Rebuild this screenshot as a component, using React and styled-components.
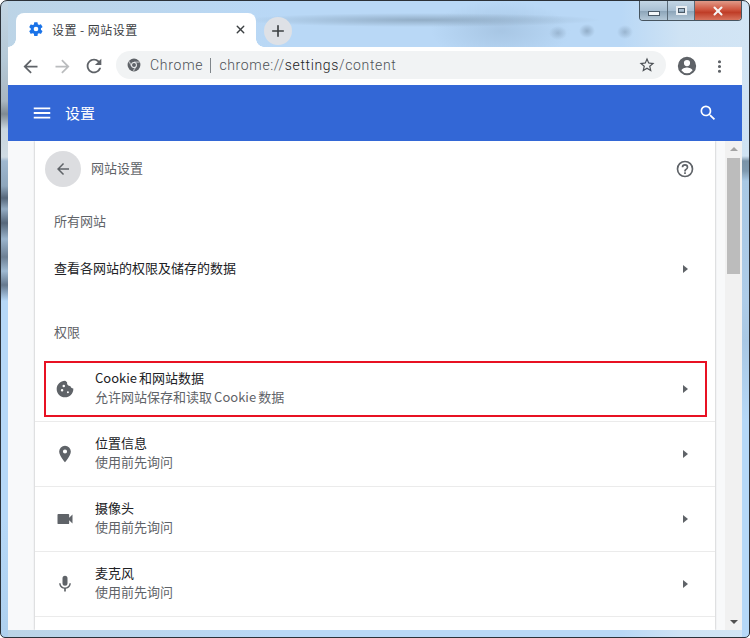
import React from 'react';
import styled, {createGlobalStyle} from 'styled-components';
import {Plus, X} from 'lucide-react';

const colors = {
    blue: '#3367d6',
    grey: '#5f6368',
    text: '#202124',
    line: '#ebebeb',
    side: '#f8f9fa',
};
const cjk = `"Noto Sans CJK SC", "Noto Sans", sans-serif`;

const Global = createGlobalStyle`
  html, body { margin: 0; padding: 0; }
  body { width: 750px; height: 638px; overflow: hidden; font-family: ${cjk}; }
`;

const leftStrip = `linear-gradient(180deg, #c3d6e4 0, #b4c8d6 60px, #a9b6c0 100px, #7f8a92 113px, #c9d6df 128px, #cfdbe3 156px,
  #9fb8d0 160px, #8ea6bc 185px, #56677a 197px, #93abc2 208px, #56677a 222px, #9ab4cc 238px, #6d8094 256px, #9fbad2 270px,
  #66798e 284px, #b6d8f7 300px, #b6d8f7 520px, #aed0ee 638px)`;
const rightStrip = `linear-gradient(180deg, #d2e5f5 0, #cfe2f2 155px, #7a93a8 160px, #7f99af 170px, #a8c8e4 180px,
  #aecce8 300px, #a9c8e4 340px, #b6d8f7 420px, #b6d8f7 638px)`;

const Frame = styled.div`
  position: relative;
  box-sizing: border-box;
  width: 750px;
  height: 638px;
  padding: 0 7px 7px 7px;
  display: flex;
  flex-direction: column;
  border: 1px solid #2b3138;
  border-radius: 7px 7px 5px 5px;
  overflow: hidden;
  background:
    ${leftStrip} 0 0 / 7px 100% no-repeat,
    ${rightStrip} right 0 top 0 / 7px 100% no-repeat,
    radial-gradient(ellipse 9px 7px at 557px 32px, rgba(120, 145, 170, .45), transparent),
    radial-gradient(ellipse 8px 7px at 586px 30px, rgba(120, 145, 170, .6), transparent),
    radial-gradient(ellipse 8px 7px at 624px 31px, rgba(120, 145, 170, .5), transparent),
    radial-gradient(ellipse 180px 7px at 420px 19px, rgba(125, 150, 172, .65), transparent),
    radial-gradient(ellipse 70px 30px at 500px 30px, rgba(150, 180, 210, .5), transparent),
    linear-gradient(90deg, #bcd4e6 0, #b9d8f6 280px, #b9d8f6 620px, #cfe3f4 680px, #d2e5f5 100%);
`;
const WindowButtons = styled.div`
  position: absolute;
  top: 0;
  right: 7px;
  display: flex;
  height: 19px;
  border: 1px solid #46545f;
  border-top: 0;
  border-radius: 0 0 4px 4px;
  overflow: hidden;
`;
const WindowButton = styled.div`
  width: ${p => p.$w}px;
  display: flex;
  align-items: center;
  justify-content: center;
  border-right: 1px solid #5a6a78;
  background: ${p => p.$close
    ? 'linear-gradient(180deg, #e09a88 0, #cf5640 45%, #bf3d27 60%, #d8735d 100%)'
    : 'linear-gradient(180deg, #c3d5e4 0, #a9bfd2 50%, #8ea6ba 55%, #b4c8d8 100%)'};
  &:last-child { border-right: 0; }
`;
const MinGlyph = styled.div`
  width: 10px;
  height: 3px;
  margin-top: 5px;
  background: #f4f7fa;
  border: 1px solid #4b5a68;
`;
const MaxGlyph = styled.div`
  box-sizing: border-box;
  width: 11px;
  height: 9px;
  background: transparent;
  border: 2px solid #e9eef3;
  outline: 1px solid #4b5a68;
  outline-offset: -3px;
`;
const CloseGlyph = styled(X)`
  color: #f6f6f6;
`;

const TabStrip = styled.div`
  height: 46px;
  padding: 12px 0 0 8px;
  box-sizing: border-box;
  display: flex;
  align-items: flex-start;
  gap: 8px;
  flex-shrink: 0;
`;
const Tab = styled.div`
  position: relative;
  width: 240px;
  height: 34px;
  box-sizing: border-box;
  padding: 0 9px 2px 12px;
  background: #fff;
  border-radius: 8px 8px 0 0;
  display: flex;
  align-items: center;
  font-size: 12px;
  letter-spacing: 0.45px;
  color: #3c4043;
  &::before, &::after {
    content: '';
    position: absolute;
    bottom: 0;
    width: 8px;
    height: 8px;
  }
  &::before {
    left: -8px;
    background: radial-gradient(circle at 0 0, transparent 7.5px, #fff 8px);
  }
  &::after {
    right: -8px;
    background: radial-gradient(circle at 100% 0, transparent 7.5px, #fff 8px);
  }
`;
const TabTitle = styled.span`
  margin-left: 8px;
  flex: 1;
`;
const NewTab = styled.div`
  width: 28px;
  height: 28px;
  margin-top: 4px;
  border-radius: 50%;
  background: #dee1e6;
  display: flex;
  align-items: center;
  justify-content: center;
  color: #3c4043;
`;

const Toolbar = styled.div`
  height: 38px;
  box-sizing: border-box;
  background: #fff;
  display: flex;
  align-items: flex-start;
  padding: 4px 0 0 0;
  flex-shrink: 0;
`;
const NavButton = styled.div`
  width: 32px;
  height: 30px;
  display: flex;
  align-items: center;
  justify-content: center;
  color: ${p => p.$off ? '#babcbe' : colors.grey};
`;
const Nav = styled.div`
  display: flex;
  margin-left: 6px;
`;
const Omnibox = styled.div`
  margin-left: 6px;
  width: 550px;
  height: 28px;
  border-radius: 14px;
  background: #f1f3f4;
  display: flex;
  align-items: center;
  padding: 0 10px 0 11px;
  box-sizing: border-box;
  font-family: Roboto, sans-serif;
  font-weight: 300;
  font-size: 14px;
  color: #4d5156;
`;
const Origin = styled.span`
  margin-left: 9px;
  letter-spacing: 0.75px;
`;
const Divider = styled.span`
  width: 1px;
  height: 15px;
  background: #80868b;
  margin: 0 8px 0 7px;
`;
const Url = styled.span`
  flex: 1;
  letter-spacing: 0.65px;
  b { font-weight: 300; color: #202124; }
`;
const ToolbarEnd = styled.div`
  margin-left: 4px;
  display: flex;
  align-items: center;
  height: 30px;
`;
const ToolIcon = styled.div`
  width: 33px;
  height: 30px;
  display: flex;
  align-items: center;
  justify-content: center;
  color: ${colors.grey};
`;

const Header = styled.div`
  height: 56px;
  background: ${colors.blue};
  display: flex;
  align-items: center;
  color: #fff;
  padding: 0 24px 0 23px;
  flex-shrink: 0;
`;
const HeaderTitle = styled.span`
  margin-left: 12px;
  margin-bottom: 2px;
  font-size: 15px;
  flex: 1;
`;

const Body = styled.div`
  flex: 1;
  min-height: 0;
  display: flex;
  background: ${colors.side};
  overflow: hidden;
`;
const Card = styled.div`
  width: 680px;
  margin-left: 27px;
  background: #fff;
  box-shadow: 0 0 2px rgba(60, 64, 67, .4);
  flex-shrink: 0;
`;
const Scrollbar = styled.div`
  margin-left: 10px;
  width: 17px;
  background: #f1f1f1;
  display: flex;
  flex-direction: column;
  align-items: center;
  justify-content: space-between;
  padding: 6px 0;
  position: relative;
`;
const ScrollThumb = styled.div`
  position: absolute;
  top: 17px;
  left: 2px;
  width: 13px;
  height: 116px;
  background: #bcbcbc;
`;
const ScrollArrow = styled.div`
  width: 0;
  height: 0;
  border-left: 4px solid transparent;
  border-right: 4px solid transparent;
  ${p => p.$down ? 'border-top: 4px solid #505050;' : 'border-bottom: 4px solid #a3a3a3;'}
`;

const PageHead = styled.div`
  height: 56px;
  display: flex;
  align-items: center;
  padding: 0 20px 0 10px;
`;
const BackCircle = styled.div`
  width: 36px;
  height: 36px;
  border-radius: 50%;
  background: #dcdde0;
  display: flex;
  align-items: center;
  justify-content: center;
  color: ${colors.grey};
`;
const PageTitle = styled.span`
  margin-left: 10px;
  margin-bottom: 4px;
  font-size: 13px;
  color: ${colors.grey};
  flex: 1;
`;
const SectionLabel = styled.div`
  height: ${p => p.$h}px;
  padding: ${p => p.$top}px 0 0 19px;
  box-sizing: border-box;
  font-size: 13px;
  line-height: 20px;
  color: ${colors.grey};
`;
const PlainRow = styled.div`
  height: 46px;
  display: flex;
  align-items: center;
  padding: 0 26px 0 19px;
  font-size: 13px;
  color: ${colors.text};
  justify-content: space-between;
`;
const PlainText = styled.span`
  margin-bottom: 4px;
`;
const Row = styled.div`
  height: 65px;
  box-sizing: border-box;
  display: flex;
  align-items: center;
  padding: 0 26px 0 20px;
  border-bottom: 1px solid ${colors.line};
`;
const RowIcon = styled.div`
  width: 20px;
  height: 20px;
  color: ${colors.grey};
  display: flex;
  align-items: center;
  justify-content: center;
`;
const RowText = styled.div`
  margin-left: 20px;
  margin-bottom: 4px;
  flex: 1;
  font-size: 13px;
  line-height: 19px;
  word-spacing: -0.8px;
  color: ${colors.text};
`;
const RowSub = styled.div`
  color: ${colors.grey};
`;
const Arrow = styled.div`
  width: 0;
  height: 0;
  border-top: 4px solid transparent;
  border-bottom: 4px solid transparent;
  border-left: 5px solid ${colors.grey};
  margin-right: 1px;
`;
const RedBox = styled.div`
  position: absolute;
  left: 43px;
  top: 360px;
  width: 663px;
  height: 56px;
  box-sizing: border-box;
  border: 2px solid #e81123;
  pointer-events: none;
`;

// material icons, same set chrome uses
const Icon = ({d, size = 20, fill = 'currentColor'}) => (
    <svg width={size} height={size} viewBox="0 0 24 24" fill={fill}><path d={d}/></svg>
);
const paths = {
    back: 'M20 11H7.83l5.59-5.59L12 4l-8 8 8 8 1.41-1.41L7.83 13H20v-2z',
    forward: 'M12 4l-1.41 1.41L16.17 11H4v2h12.17l-5.58 5.59L12 20l8-8z',
    reload: 'M17.65 6.35A7.958 7.958 0 0 0 12 4c-4.42 0-7.99 3.58-7.99 8s3.57 8 7.99 8c3.73 0 6.84-2.55 7.73-6h-2.08A5.99 5.99 0 0 1 12 18c-3.31 0-6-2.69-6-6s2.69-6 6-6c1.66 0 3.14.69 4.22 1.78L13 11h7V4l-2.35 2.35z',
    star: 'M22 9.24l-7.19-.62L12 2 9.19 8.63 2 9.24l5.46 4.73L5.82 21 12 17.27 18.18 21l-1.63-7.03L22 9.24zM12 15.4l-3.76 2.27 1-4.28-3.32-2.88 4.38-.38L12 6.1l1.71 4.04 4.38.38-3.32 2.88 1 4.28L12 15.4z',
    more: 'M12 8a2 2 0 1 0 0-4 2 2 0 0 0 0 4zm0 2a2 2 0 1 0 0 4 2 2 0 0 0 0-4zm0 6a2 2 0 1 0 0 4 2 2 0 0 0 0-4z',
    menu: 'M3 18h18v-2H3v2zm0-5h18v-2H3v2zm0-7v2h18V6H3z',
    search: 'M15.5 14h-.79l-.28-.27A6.471 6.471 0 0 0 16 9.5 6.5 6.5 0 1 0 9.5 16c1.61 0 3.09-.59 4.23-1.57l.27.28v.79l5 4.99L20.49 19l-4.99-5zm-6 0C7.01 14 5 11.99 5 9.5S7.01 5 9.5 5 14 7.01 14 9.5 11.99 14 9.5 14z',
};

const GearIcon = () => (
    <svg width="16" height="16" viewBox="0 0 24 24" fill="#1a73e8">
        <path d="M19.4 13c.04-.32.06-.66.06-1s-.02-.68-.07-1l2.16-1.68a.5.5 0 0 0 .12-.64l-2.05-3.54a.5.5 0 0 0-.62-.22l-2.55 1.02a7.5 7.5 0 0 0-1.73-1l-.39-2.7A.5.5 0 0 0 13.83 2H9.74a.5.5 0 0 0-.5.43l-.38 2.71c-.63.26-1.2.6-1.73 1L4.58 5.12a.5.5 0 0 0-.62.22L1.91 8.88a.5.5 0 0 0 .12.64L4.2 11.2a7.9 7.9 0 0 0 0 2L2.03 14.9a.5.5 0 0 0-.12.64l2.05 3.54c.13.22.39.3.62.22l2.55-1.02c.53.4 1.1.74 1.73 1l.38 2.7c.05.24.26.42.5.42h4.09c.25 0 .46-.18.5-.43l.38-2.7a7.5 7.5 0 0 0 1.73-1l2.55 1.02c.23.08.49 0 .62-.22l2.05-3.54a.5.5 0 0 0-.12-.64zM12 15.5a3.5 3.5 0 1 1 0-7 3.5 3.5 0 0 1 0 7z"/>
    </svg>
);
const ChromeIcon = () => (
    <svg width="14" height="14" viewBox="0 0 24 24">
        <circle cx="12" cy="12" r="11" fill="#5f6368"/>
        <path d="M12 7h9.5M8 14L3.5 6M15.5 14L11 22" stroke="#b4b6b9" strokeWidth="2.2" fill="none"/>
        <circle cx="12" cy="12" r="5" fill="#f1f3f4"/>
        <circle cx="12" cy="12" r="3.4" fill="#5f6368"/>
    </svg>
);
const AccountIcon = () => (
    <svg width="22" height="22" viewBox="0 0 24 24" fill={colors.grey}>
        <path d="M12 2a10 10 0 1 0 0 20 10 10 0 0 0 0-20zm0 3.4a3.4 3.4 0 1 1 0 6.8 3.4 3.4 0 0 1 0-6.8zm0 14.4a7.6 7.6 0 0 1-6-3c.03-2 4-3.1 6-3.1s5.97 1.1 6 3.1a7.6 7.6 0 0 1-6 3z"/>
    </svg>
);
const HelpIcon = () => (
    <svg width="20" height="20" viewBox="0 0 24 24" fill={colors.grey}>
        <path d="M11 18h2v-2h-2v2zm1-16a10 10 0 1 0 0 20 10 10 0 0 0 0-20zm0 18a8 8 0 1 1 0-16 8 8 0 0 1 0 16zm0-14a4 4 0 0 0-4 4h2a2 2 0 1 1 4 0c0 2-3 1.75-3 5h2c0-2.25 3-2.5 3-5a4 4 0 0 0-4-4z"/>
    </svg>
);
const CookieIcon = () => (
    <svg width="20" height="20" viewBox="0 0 24 24" fill={colors.grey}>
        <path d="M21.9 11.3c-1.7 0-3.2-1.2-3.5-2.9-1.9.3-3.7-1.1-3.9-3-.1-.5-.1-1 .1-1.4C13.6 3.3 12.8 2 12 2 6.5 2 2 6.5 2 12s4.5 10 10 10 10-4.5 10-10c0-.2 0-.5-.1-.7zM8.5 15a1.5 1.5 0 1 1 0-3 1.5 1.5 0 0 1 0 3zm2-5a1.5 1.5 0 1 1 0-3 1.5 1.5 0 0 1 0 3zm5 7a1.2 1.2 0 1 1 0-2.4 1.2 1.2 0 0 1 0 2.4z"/>
    </svg>
);
const PinIcon = () => (
    <svg width="20" height="20" viewBox="0 0 24 24" fill={colors.grey}>
        <path d="M12 2a7 7 0 0 0-7 7c0 5.25 7 13 7 13s7-7.75 7-13a7 7 0 0 0-7-7zm0 9.5a2.5 2.5 0 1 1 0-5 2.5 2.5 0 0 1 0 5z"/>
    </svg>
);
const CameraIcon = () => (
    <svg width="20" height="20" viewBox="0 0 24 24" fill={colors.grey}>
        <path d="M17 10.5V7a1 1 0 0 0-1-1H4a1 1 0 0 0-1 1v10a1 1 0 0 0 1 1h12a1 1 0 0 0 1-1v-3.5l4 4v-11l-4 4z"/>
    </svg>
);
const MicIcon = () => (
    <svg width="20" height="20" viewBox="0 0 24 24" fill={colors.grey}>
        <path d="M12 14a3 3 0 0 0 3-3V5a3 3 0 0 0-6 0v6a3 3 0 0 0 3 3zm5.3-3c0 3-2.54 5.1-5.3 5.1S6.7 14 6.7 11H5c0 3.41 2.72 6.23 6 6.72V21h2v-3.28c3.28-.48 6-3.3 6-6.72h-1.7z"/>
    </svg>
);

const permissions = [
    {icon: <CookieIcon/>, title: 'Cookie 和网站数据', sub: '允许网站保存和读取 Cookie 数据'},
    {icon: <PinIcon/>, title: '位置信息', sub: '使用前先询问'},
    {icon: <CameraIcon/>, title: '摄像头', sub: '使用前先询问'},
    {icon: <MicIcon/>, title: '麦克风', sub: '使用前先询问'},
];

const App = () => {
    const rows = permissions.map(item => {
        return (
            <Row key={item.title}>
                <RowIcon>{item.icon}</RowIcon>
                <RowText>
                    <div>{item.title}</div>
                    <RowSub>{item.sub}</RowSub>
                </RowText>
                <Arrow/>
            </Row>
        );
    });
    return (
        <Frame>
            <Global/>
            <WindowButtons>
                <WindowButton $w={27}><MinGlyph/></WindowButton>
                <WindowButton $w={26}><MaxGlyph/></WindowButton>
                <WindowButton $w={46} $close><CloseGlyph size={14} strokeWidth={3.5}/></WindowButton>
            </WindowButtons>
            <TabStrip>
                <Tab>
                    <GearIcon/>
                    <TabTitle>设置 - 网站设置</TabTitle>
                    <X size={13} strokeWidth={2.5}/>
                </Tab>
                <NewTab><Plus size={18} strokeWidth={2.2}/></NewTab>
            </TabStrip>
            <Toolbar>
                <Nav>
                    <NavButton><Icon d={paths.back} size={21}/></NavButton>
                    <NavButton $off><Icon d={paths.forward} size={21}/></NavButton>
                    <NavButton><Icon d={paths.reload} size={22}/></NavButton>
                </Nav>
                <Omnibox>
                    <ChromeIcon/>
                    <Origin>Chrome</Origin>
                    <Divider/>
                    <Url>chrome://<b>settings</b>/content</Url>
                    <Icon d={paths.star} size={18}/>
                </Omnibox>
                <ToolbarEnd>
                    <ToolIcon><AccountIcon/></ToolIcon>
                    <ToolIcon><Icon d={paths.more} size={19}/></ToolIcon>
                </ToolbarEnd>
            </Toolbar>
            <Header>
                <Icon d={paths.menu} size={22}/>
                <HeaderTitle>设置</HeaderTitle>
                <Icon d={paths.search} size={20}/>
            </Header>
            <Body>
                <Card>
                    <PageHead>
                        <BackCircle><Icon d={paths.back} size={18}/></BackCircle>
                        <PageTitle>网站设置</PageTitle>
                        <HelpIcon/>
                    </PageHead>
                    <SectionLabel $h={49} $top={14}>所有网站</SectionLabel>
                    <PlainRow><PlainText>查看各网站的权限及储存的数据</PlainText><Arrow/></PlainRow>
                    <SectionLabel $h={65} $top={30}>权限</SectionLabel>
                    {rows}
                </Card>
                <Scrollbar>
                    <ScrollArrow/>
                    <ScrollThumb/>
                    <ScrollArrow $down/>
                </Scrollbar>
            </Body>
            <RedBox/>
        </Frame>
    );
};

export default App;
